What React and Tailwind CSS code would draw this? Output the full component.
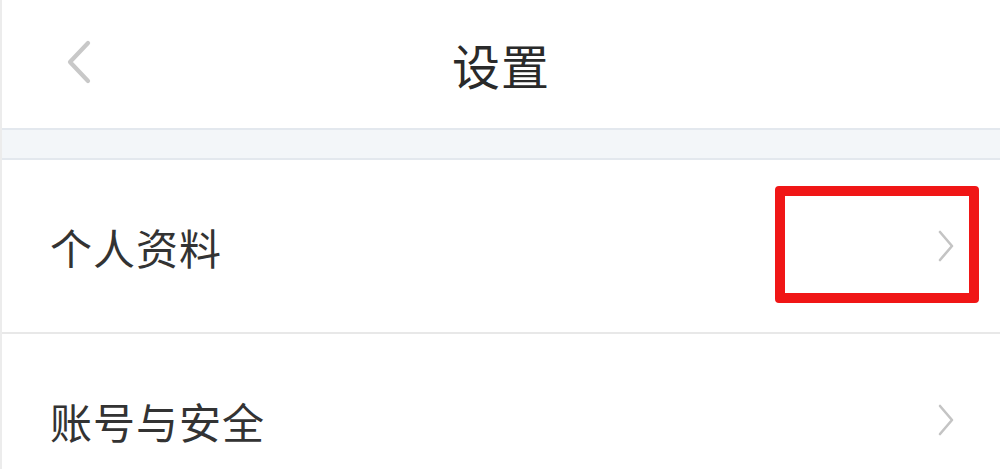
import React from "react";

const font = { fontFamily: '"Noto Sans CJK SC", "Noto Sans", sans-serif' };

function Chevron({ dir = "right", className = "" }) {
  const d = dir === "right" ? "M4 3 L16 17 L4 31" : "M24 3 L6 22 L24 41";
  const vb = dir === "right" ? "0 0 20 34" : "0 0 30 44";
  return (
    <svg viewBox={vb} className={className} fill="none" stroke="currentColor" strokeLinecap="round" strokeLinejoin="round" strokeWidth={dir === "right" ? 2.6 : 4.2}>
      <path d={d} />
    </svg>
  );
}

function Row({ label, children }) {
  return (
    <div className="relative flex h-[172px] items-center justify-between bg-white pl-[48px] pr-[44px]">
      <span className="text-[42px] tracking-[1px] text-[#333]" style={font}>{label}</span>
      <Chevron className="h-[34px] w-[20px] text-[#c4c4c4]" />
      {children}
    </div>
  );
}

export default function App() {
  return (
    <div className="h-[469px] w-[1000px] overflow-hidden bg-white border-l-2 border-[#ececec]" style={font}>
      <header className="relative flex h-[128px] items-center justify-center bg-white">
        <div className="absolute left-[62px] top-[40px] text-[#c8c8c8]">
          <Chevron dir="left" className="h-[44px] w-[30px]" />
        </div>
        <h1 className="text-[48px] font-normal tracking-[1px] text-[#2a2a2a]" style={font}>设置</h1>
      </header>
      <div className="h-[32px] border-y-2 border-[#e3e8ee] bg-[#f3f6f9]" />
      <Row label="个人资料">
        <div className="pointer-events-none absolute left-[773px] top-[26px] h-[117px] w-[204px] rounded-[4px] border-[10px] border-[#f01616]" />
      </Row>
      <div className="h-[2px] bg-[#e8e8e8]" />
      <Row label="账号与安全" />
    </div>
  );
}
